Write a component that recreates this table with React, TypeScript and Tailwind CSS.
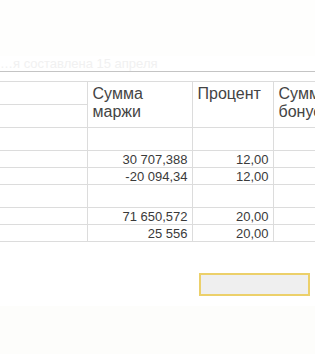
import React from 'react';

const rows = [
  { h: 'h-[23px]', sum: '', pct: '', bonus: '' },
  { h: 'h-[17px]', sum: '30 707,388', pct: '12,00', bonus: '3 684,887' },
  { h: 'h-[17px]', sum: '-20 094,34', pct: '12,00', bonus: '' },
  { h: 'h-[23px]', sum: '', pct: '', bonus: '' },
  { h: 'h-[17px]', sum: '71 650,572', pct: '20,00', bonus: '' },
  { h: 'h-[17px]', sum: '25 556', pct: '20,00', bonus: '' },
];

export default function App() {
  return (
    <div className="w-[315px] h-[354px] overflow-hidden bg-white font-['Liberation_Sans',Arial,sans-serif] text-[#3a3a3a]">
      {/* faded header area */}
      <div className="h-[56px] bg-[#fefefd]" />
      <div className="h-[15px] text-[13px] leading-[15px] text-[#f1f1f1] whitespace-nowrap">
        …я составлена 15 апреля
      </div>
      <div className="h-px bg-[#c4c4c4]" />
      <div className="h-[9px]" />

      <table className="table-fixed border-collapse w-[382px]">
        <colgroup>
          <col className="w-[87px]" />
          <col className="w-[105px]" />
          <col className="w-[81px]" />
          <col className="w-[109px]" />
        </colgroup>
        <thead>
          <tr className="h-[23px]">
            <td className="border-t border-b border-[#dcdcdc] p-0" />
            <td rowSpan={2} className="border border-[#dcdcdc] align-top px-[5px] pt-[3px] text-[16px] leading-[18px] text-[#444]">
              Сумма маржи
            </td>
            <td rowSpan={2} className="border border-[#dcdcdc] align-top px-[5px] pt-[3px] text-[16px] leading-[18px] text-[#444]">
              Процент
            </td>
            <td rowSpan={2} className="border border-[#dcdcdc] align-top px-[5px] pt-[3px] text-[16px] leading-[18px] text-[#444]">
              Сумма
              <br />
              бонуса
            </td>
          </tr>
          <tr className="h-[23px]">
            <td className="border-b border-[#dcdcdc] p-0" />
          </tr>
        </thead>
        <tbody>
          {rows.map((r, i) => (
            <tr key={i} className={r.h}>
              <td className="border-b border-[#dcdcdc] p-0" />
              <td className="border-x border-b border-[#dcdcdc] p-0 pr-[4px] text-right text-[13px] leading-[15px] whitespace-nowrap">
                {r.sum}
              </td>
              <td className="border-x border-b border-[#dcdcdc] p-0 pr-[4px] text-right text-[13px] leading-[15px]">
                {r.pct}
              </td>
              <td className="border-x border-b border-[#dcdcdc] p-0 pr-[4px] text-right text-[13px] leading-[15px] whitespace-nowrap">
                {r.bonus}
              </td>
            </tr>
          ))}
        </tbody>
      </table>

      <div className="flex justify-end pr-[5px] pt-[31px]">
        <div className="w-[111px] h-[23px] border-2 border-[#ecd06a] bg-[#efefef]" />
      </div>
      <div className="mt-[10px] h-[50px] bg-[#fdfdfb]" />
    </div>
  );
}
